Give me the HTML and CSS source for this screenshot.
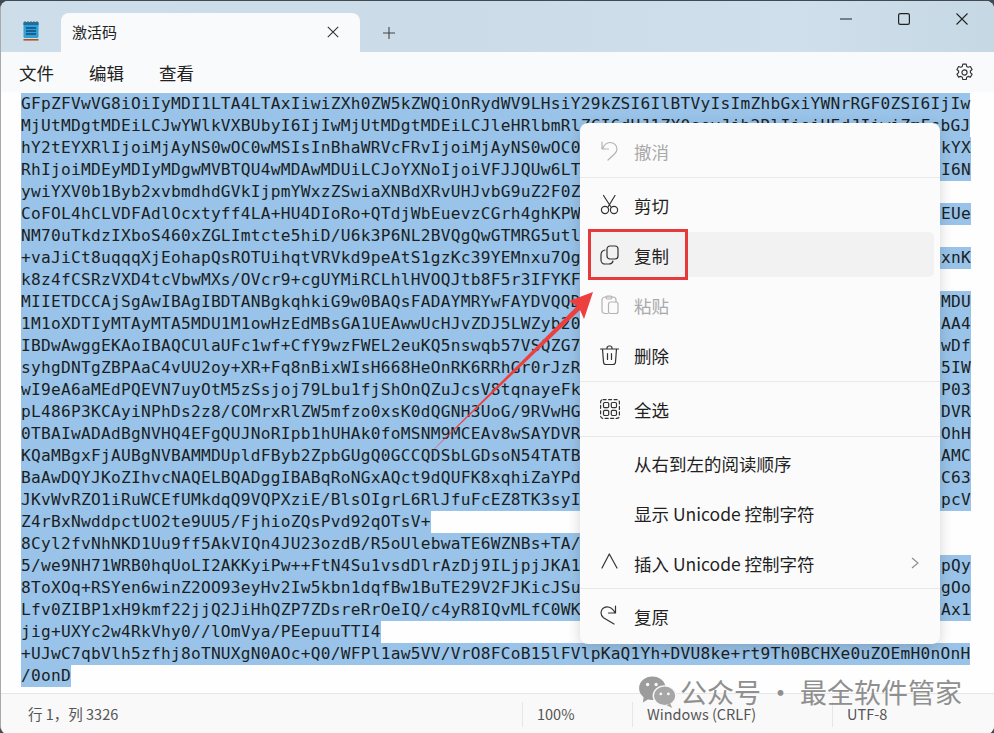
FILE: index.html
```html
<!DOCTYPE html>
<html lang="zh-CN">
<head>
<meta charset="utf-8">
<title>激活码</title>
<link rel="stylesheet" href="styles.css">
</head>
<body>
<div class="window">
  <header class="titlebar">
    <svg class="app-icon" viewBox="0 0 16 20" width="16" height="20">
      <rect x="0.5" y="1" width="15" height="16" rx="1.5" fill="#2f9fd6"/>
      <rect x="0.5" y="1" width="15" height="3" fill="#1d6f9e"/>
      <path d="M2 0v2M5 0v2M8 0v2M11 0v2M14 0v2" stroke="#5b6b78" stroke-width="1"/>
      <path d="M3 7h10M3 10h10M3 13h10" stroke="#0f4e75" stroke-width="1.3"/>
      <rect x="0.5" y="18" width="15" height="1.6" fill="#b4521d"/>
    </svg>
    <div class="tab">
      <span class="tab-title">激活码</span>
      <svg class="tab-close" viewBox="0 0 12 12" width="12" height="12"><path d="M.8.8l10.4 10.4M11.2.8L.8 11.2" stroke="#333" stroke-width="1.1" fill="none"/></svg>
    </div>
    <svg class="tab-add" viewBox="0 0 12 12" width="12" height="12"><path d="M6 0v12M0 6h12" stroke="#444" stroke-width="1.1" fill="none"/></svg>
    <div class="controls">
      <svg viewBox="0 0 12 12" width="12" height="12"><path d="M0 6h12" stroke="#222" stroke-width="1.1"/></svg>
      <svg viewBox="0 0 12 12" width="12" height="12"><rect x=".6" y=".6" width="10.8" height="10.8" rx="1.6" fill="none" stroke="#222" stroke-width="1.2"/></svg>
      <svg viewBox="0 0 12 12" width="12" height="12"><path d="M.5.5l11 11M11.5.5l-11 11" stroke="#222" stroke-width="1.1" fill="none"/></svg>
    </div>
  </header>
  <nav class="menubar">
    <span>文件</span><span>编辑</span><span>查看</span>
    <svg class="gear" viewBox="0 0 20 20" width="19" height="19"><path d="M8.2 1.2h3.6l.5 2.4 1.6.9 2.3-.8 1.8 3.1-1.8 1.6v1.8l1.8 1.6-1.8 3.1-2.3-.8-1.6.9-.5 2.4H8.2l-.5-2.4-1.6-.9-2.3.8-1.8-3.1 1.8-1.6V8.4L2 6.8l1.8-3.1 2.3.8 1.6-.9z" fill="none" stroke="#333" stroke-width="1.2" stroke-linejoin="round"/><circle cx="10" cy="10" r="2.7" fill="none" stroke="#333" stroke-width="1.2"/></svg>
  </nav>
  <main class="editor">
    <div class="line"><span>GFpZFVwVG8iOiIyMDI1LTA4LTAxIiwiZXh0ZW5kZWQiOnRydWV9LHsiY29kZSI6IlBTVyIsImZhbGxiYWNrRGF0ZSI6IjIw</span></div>
    <div class="line"><span>MjUtMDgtMDEiLCJwYWlkVXBUbyI6IjIwMjUtMDgtMDEiLCJleHRlbmRlZCI6dHJ1ZX0seyJjb2RlIjoiUEdJIiwiZmFsbGJ</span></div>
    <div class="line full"><span>hY2tEYXRlIjoiMjAyNS0wOC0wMSIsInBhaWRVcFRvIjoiMjAyNS0wOC0</span><span>kYX</span></div>
    <div class="line full"><span>RhIjoiMDEyMDIyMDgwMVBTQU4wMDAwMDUiLCJoYXNoIjoiVFJJQUw6LT</span><span>I6N</span></div>
    <div class="line"><span>ywiYXV0b1Byb2xvbmdhdGVkIjpmYWxzZSwiaXNBdXRvUHJvbG9uZ2F0Z</span></div>
    <div class="line full"><span>CoFOL4hCLVDFAdlOcxtyff4LA+HU4DIoRo+QTdjWbEuevzCGrh4ghKPW</span><span>EUe</span></div>
    <div class="line"><span>NM70uTkdzIXboS460xZGLImtcte5hiD/U6k3P6NL2BVQgQwGTMRG5utl</span></div>
    <div class="line full"><span>+vaJiCt8uqqqXjEohapQsROTUihqtVRVkd9peAtS1gzKc39YEMnxu7Og</span><span>xnK</span></div>
    <div class="line"><span>k8z4fCSRzVXD4tcVbwMXs/OVcr9+cgUYMiRCLhlHVOQJtb8F5r3IFYKF</span></div>
    <div class="line full"><span>MIIETDCCAjSgAwIBAgIBDTANBgkqhkiG9w0BAQsFADAYMRYwFAYDVQQD</span><span>MDU</span></div>
    <div class="line full"><span>1M1oXDTIyMTAyMTA5MDU1M1owHzEdMBsGA1UEAwwUcHJvZDJ5LWZyb20</span><span>AA4</span></div>
    <div class="line full"><span>IBDwAwggEKAoIBAQCUlaUFc1wf+CfY9wzFWEL2euKQ5nswqb57VSQZG7</span><span>wDf</span></div>
    <div class="line full"><span>syhgDNTgZBPAaC4vUU2oy+XR+Fq8nBixWIsH668HeOnRK6RRhGr0rJzR</span><span>5IW</span></div>
    <div class="line full"><span>wI9eA6aMEdPQEVN7uyOtM5zSsjoj79Lbu1fjShOnQZuJcsV8tqnayeFk</span><span>P03</span></div>
    <div class="line full"><span>pL486P3KCAyiNPhDs2z8/COMrxRlZW5mfzo0xsK0dQGNH3UoG/9RVwHG</span><span>DVR</span></div>
    <div class="line full"><span>0TBAIwADAdBgNVHQ4EFgQUJNoRIpb1hUHAk0foMSNM9MCEAv8wSAYDVR</span><span>OhH</span></div>
    <div class="line full"><span>KQaMBgxFjAUBgNVBAMMDUpldFByb2ZpbGUgQ0GCCQDSbLGDsoN54TATB</span><span>AMC</span></div>
    <div class="line full"><span>BaAwDQYJKoZIhvcNAQELBQADggIBABqRoNGxAQct9dQUFK8xqhiZaYPd</span><span>C63</span></div>
    <div class="line full"><span>JKvWvRZO1iRuWCEfUMkdqQ9VQPXziE/BlsOIgrL6RlJfuFcEZ8TK3syI</span><span>pcV</span></div>
    <div class="line"><span>Z4rBxNwddpctUO2te9UU5/FjhioZQsPvd92qOTsV+</span></div>
    <div class="line"><span>8Cyl2fvNhNKD1Uu9ff5AkVIQn4JU23ozdB/R5oUlebwaTE6WZNBs+TA/</span></div>
    <div class="line full"><span>5/we9NH71WRB0hqUoLI2AKKyiPw++FtN4Su1vsdDlrAzDj9ILjpjJKA1</span><span>pQy</span></div>
    <div class="line full"><span>8ToXOq+RSYen6winZ2OO93eyHv2Iw5kbn1dqfBw1BuTE29V2FJKicJSu</span><span>gOo</span></div>
    <div class="line full"><span>Lfv0ZIBP1xH9kmf22jjQ2JiHhQZP7ZDsreRrOeIQ/c4yR8IQvMLfC0WK</span><span>Ax1</span></div>
    <div class="line"><span>jig+UXYc2w4RkVhy0//lOmVya/PEepuuTTI4</span></div>
    <div class="line"><span>+UJwC7qbVlh5zfhj8oTNUXgN0AOc+Q0/WFPl1aw5VV/VrO8FCoB15lFVlpKaQ1Yh+DVU8ke+rt9Th0BCHXe0uZOEmH0nOnH</span></div>
    <div class="line"><span>/0onD</span></div>
  </main>
  <footer class="statusbar">
    <span class="st st-pos">行 1，列 3326</span>
    <span class="st st-zoom">100%</span>
    <span class="st st-eol">Windows (CRLF)</span>
    <span class="st st-enc">UTF-8</span>
  </footer>

  <div class="context-menu">
    <div class="item disabled">
      <svg class="ic" viewBox="0 0 20 20"><path d="M2 1v7h6.500M2.500 8C4 4 7 1.500 10 1.500c4 0 7 3 7 6.500 0 2-1 3.500-2.500 5L8 19"/></svg>
      <span>撤消</span>
    </div>
    <div class="sep"></div>
    <div class="item">
      <svg class="ic" viewBox="0 0 20 20"><circle cx="5" cy="15" r="3.600"/><circle cx="14" cy="15" r="3.600"/><path d="M3.500 .5L11 12M15 .5L8 12"/></svg>
      <span>剪切</span>
    </div>
    <div class="item hovered">
      <svg class="ic" viewBox="0 0 20 20"><rect x="7" y="1" width="11" height="13" rx="3"/><path d="M5 5C2.500 5.500 1 7.500 1 10v5c0 2.500 2 4 4 4h4c2 0 3.500-1 4-3"/></svg>
      <span>复制</span>
    </div>
    <div class="item disabled">
      <svg class="ic" viewBox="0 0 20 20"><rect x="8.500" y="7" width="9.500" height="11.500" rx="2"/><path d="M8 18.500H5a3 3 0 0 1-3-3V5a3 3 0 0 1 3-3h8a3 3 0 0 1 3 3v2"/><rect x="6" y="1" width="6" height="3" rx="1.500"/></svg>
      <span>粘贴</span>
    </div>
    <div class="item">
      <svg class="ic" viewBox="0 0 20 20"><path d="M.5 4h18M7 4V3a2 2 0 0 1 2-2h1a2 2 0 0 1 2 2v1M2.500 4l1 13a2.500 2.500 0 0 0 2.500 2.500h7a2.500 2.500 0 0 0 2.500-2.500l1-13M7.500 8.500v6M11.500 8.500v6"/></svg>
      <span>删除</span>
    </div>
    <div class="sep"></div>
    <div class="item">
      <svg class="ic" viewBox="0 0 20 20"><rect x="3.500" y="3.500" width="5.200" height="5.200" rx="1.200"/><rect x="11.300" y="3.500" width="5.200" height="5.200" rx="1.200"/><rect x="3.500" y="11.300" width="5.200" height="5.200" rx="1.200"/><rect x="11.300" y="11.300" width="5.200" height="5.200" rx="1.200"/><rect x=".6" y=".6" width="18.800" height="18.800" rx="2.500" stroke-dasharray="3 2.500"/></svg>
      <span>全选</span>
    </div>
    <div class="sep sep-wide"></div>
    <div class="item"><span class="no-icon">从右到左的阅读顺序</span></div>
    <div class="item"><span class="no-icon">显示 Unicode 控制字符</span></div>
    <div class="item">
      <svg class="ic" viewBox="0 0 20 20"><path d="M2 15L9.300 1 17 15"/></svg>
      <span>插入 Unicode 控制字符</span>
      <svg class="chev" viewBox="0 0 8 12" width="8" height="12"><path d="M1 1l6 5-6 5" fill="none" stroke="#8a8a8a" stroke-width="1.100"/></svg>
    </div>
    <div class="sep sep-narrow"></div>
    <div class="item">
      <svg class="ic" viewBox="0 0 20 20"><path d="M15.500 0v7h-7M15 6.500C13 3 10 .8 7 .8 3.500.8 1 3.500 1 6.800c0 2 1 3.700 2.500 5L14 18"/></svg>
      <span>复原</span>
    </div>
  </div>

  <div class="highlight-box"></div>
  <svg class="arrow" viewBox="0 0 994 733" width="994" height="733">
    <path d="M424 459L577 306L569 301L593 292L584 319L580 310z" fill="#ee3f3f"/>
  </svg>

  <div class="watermark">
    <svg viewBox="0 0 42 36" width="40" height="34"><ellipse cx="15" cy="14" rx="14" ry="12.500" fill="#9c9c9c"/><path d="M6 22l-1 7 7-4z" fill="#9c9c9c"/><ellipse cx="28" cy="22" rx="12" ry="10.500" fill="#a6a6a6" stroke="#f8f8f8" stroke-width="1.500"/><path d="M34 30l2 5-6-3z" fill="#a6a6a6"/><circle cx="10" cy="10" r="1.800" fill="#f8f8f8"/><circle cx="19" cy="10" r="1.800" fill="#f8f8f8"/><circle cx="24" cy="20" r="1.500" fill="#f8f8f8"/><circle cx="32" cy="20" r="1.500" fill="#f8f8f8"/></svg>
    <span>公众号 · 最全软件管家</span>
  </div>
</div>
</body>
</html>
```

FILE: styles.css
```css
* { box-sizing: border-box; }
html, body { margin: 0; padding: 0; background: #3f4a52; }
body { width: 994px; height: 733px; overflow: hidden; font-family: "Noto Sans CJK SC", "Noto Sans", sans-serif; }

.window {
  position: relative;
  width: 994px;
  height: 733px;
  margin-top: 1px;
  display: flex;
  flex-direction: column;
  overflow: hidden;
  background: #fefefe;
  border-radius: 8px;
  border-left: 1px solid #a9a9a9;
}

.titlebar {
  height: 51px;
  flex: none;
  display: flex;
  align-items: flex-end;
  position: relative;
  background: linear-gradient(90deg, #cddde9 0%, #cbdbe8 45%, #cfe0ec 80%, #c6d8e4 100%);
}
.app-icon { position: absolute; left: 22px; top: 20px; }
.tab {
  margin-left: 60px;
  width: 299px;
  height: 39px;
  background: #f8fafc;
  border-radius: 8px 8px 0 0;
  display: flex;
  align-items: center;
  justify-content: space-between;
  padding: 0 21px 0 11px;
}
.tab-title { font-size: 15px; color: #222; margin-top: -2px; }
.tab-close { margin-top: -1px; }
.tab-add { margin: 0 0 13px 23px; }
.controls {
  position: absolute;
  top: 12px;
  right: 26px;
  display: flex;
  gap: 46px;
}

.menubar {
  height: 40px;
  flex: none;
  display: flex;
  align-items: center;
  gap: 35px;
  padding-left: 18px;
  font-size: 17.500px;
  color: #222;
  background: #f8fafb;
}
.gear { margin: 1px 20px 0 auto; }

.editor {
  flex: 1;
  padding: 1px 0 0 20px;
  background: #fefefe;
  font-family: "DejaVu Sans Mono", "Liberation Mono", monospace;
  font-size: 16.200px;
  letter-spacing: 0.248px;
  color: #1b1f24;
  overflow: hidden;
}
.line {
  width: fit-content;
  height: 22px;
  line-height: 22px;
  white-space: pre;
  background: #99c3e9;
}
.line.full {
  width: 950px;
  display: flex;
  justify-content: space-between;
}

.statusbar {
  height: 41px;
  flex: none;
  display: flex;
  align-items: center;
  background: #f9f9f9;
  border-top: 1px solid #e6e6e6;
  font-size: 14.500px;
  color: #555;
}
.st { height: 25px; line-height: 24px; padding-left: 14px; border-left: 1px solid #e6e6e6; }
.st-pos { width: 521px; border-left: 0; padding-left: 27px; }
.st-zoom { width: 110px; }
.st-eol { width: 200px; }
.st-enc { flex: 1; }

.context-menu {
  position: absolute;
  left: 579px;
  top: 122px;
  width: 360px;
  height: 521px;
  padding-top: 3px;
  background: #fbfbfb;
  border-radius: 8px;
  box-shadow: 0 4px 14px rgba(0,0,0,.16);
  font-size: 17.500px;
  color: #1f1f1f;
}
.item {
  height: 50px;
  display: flex;
  align-items: center;
  position: relative;
  padding-left: 54px;
  z-index: 0;
}
.item.hovered::before {
  content: "";
  position: absolute;
  z-index: -1;
  left: 9px;
  right: 6px;
  top: 2px;
  bottom: 3px;
  background: #f2f2f2;
  border-radius: 5px;
}
.item.disabled { color: #a9a9a9; }
.ic {
  position: absolute;
  left: 20px;
  top: 15px;
  width: 20px;
  height: 20px;
  fill: none;
  stroke: #333;
  stroke-width: 1.200;
  stroke-linecap: round;
  stroke-linejoin: round;
  overflow: visible;
}
.item.disabled .ic { stroke: #b4b4b4; }
.chev { position: absolute; right: 21px; top: 19px; }
.sep { height: 4px; padding-top: 1px; }
.sep::after { content: ""; display: block; height: 1px; background: #e9e9e9; }
.sep-wide { padding-top: 2px; }
.sep-narrow { height: 3px; padding-top: 0; }

.highlight-box {
  position: absolute;
  left: 587px;
  top: 228px;
  width: 100px;
  height: 51px;
  border: 3px solid #e5393b;
}
.arrow { position: absolute; left: -1px; top: -1px; pointer-events: none; }

.watermark {
  position: absolute;
  left: 637px;
  top: 674px;
  display: flex;
  align-items: center;
  gap: 2px;
  font-size: 27px;
  line-height: 28px;
  color: #8f8f8f;
  white-space: nowrap;
}
```
